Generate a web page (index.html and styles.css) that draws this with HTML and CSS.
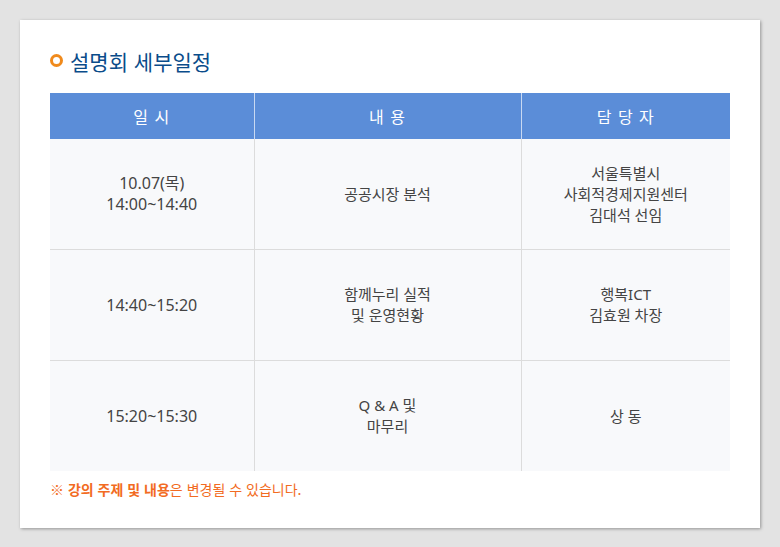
FILE: index.html
```html
<!DOCTYPE html>
<html lang="ko">
<head>
<meta charset="utf-8">
<link rel="stylesheet" href="styles.css">
</head>
<body>
<div class="card">
  <h2 class="title"><span class="dot"></span>설명회 세부일정</h2>
  <table class="sched">
    <colgroup><col class="c1"><col class="c2"><col class="c3"></colgroup>
    <thead>
      <tr><th>일 시</th><th>내 용</th><th>담 당 자</th></tr>
    </thead>
    <tbody>
      <tr><td>10.07(목)<br>14:00~14:40</td><td>공공시장 분석</td><td>서울특별시<br>사회적경제지원센터<br>김대석 선임</td></tr>
      <tr><td>14:40~15:20</td><td>함께누리 실적<br>및 운영현황</td><td>행복ICT<br>김효원 차장</td></tr>
      <tr><td>15:20~15:30</td><td>Q &amp; A 및<br>마무리</td><td>상 동</td></tr>
    </tbody>
  </table>
  <p class="note">※ <b>강의 주제 및 내용</b>은 변경될 수 있습니다.</p>
</div>
</body>
</html>
```
FILE: styles.css
```css
html, body { margin: 0; padding: 0; }
body {
  background: #e3e3e3;
  font-family: "Noto Sans CJK KR", "Noto Sans", sans-serif;
  padding: 20px;
  height: 547px;
  box-sizing: border-box;
}
.card {
  width: 740px;
  height: 508px;
  background: #fff;
  box-shadow: 1px 1px 3px rgba(0,0,0,0.35);
  box-sizing: border-box;
  padding: 27px 30px 0 30px;
}
.title {
  margin: 0 0 19px 0;
  font-size: 21px;
  font-weight: 400;
  color: #0a4c8a;
  display: flex;
  align-items: center;
  gap: 7px;
  height: 27px;
}
.dot {
  width: 7px;
  height: 7px;
  border: 3px solid #f08a1c;
  border-radius: 50%;
  display: inline-block;
}
.sched {
  width: 680px;
  border-collapse: collapse;
  table-layout: fixed;
}
.c1 { width: 204px; }
.c2 { width: 267px; }
.c3 { width: 209px; }
.sched th {
  background: #5b8dd8;
  color: #fff;
  font-weight: 400;
  font-size: 16px;
  height: 46px;
  padding: 0;
  border-left: 1px solid #c9d9f2;
  letter-spacing: 1px;
}
.sched th:first-child { border-left: none; }
.sched td {
  background: #f8f9fb;
  color: #444;
  font-family: "Noto Sans", "Noto Sans CJK KR", sans-serif;
  font-size: 15px;
  line-height: 21px;
  text-align: center;
  height: 110px;
  padding: 0;
  border-left: 1px solid #dcdcdc;
  border-top: 1px solid #dcdcdc;
}
.sched tbody tr:first-child td { border-top: none; }
.sched td:first-child { border-left: none; font-size: 16px; }
.note {
  margin: 8px 0 0 0;
  font-size: 14px;
  color: #f26b22;
}
.note b { font-weight: 700; }
```
